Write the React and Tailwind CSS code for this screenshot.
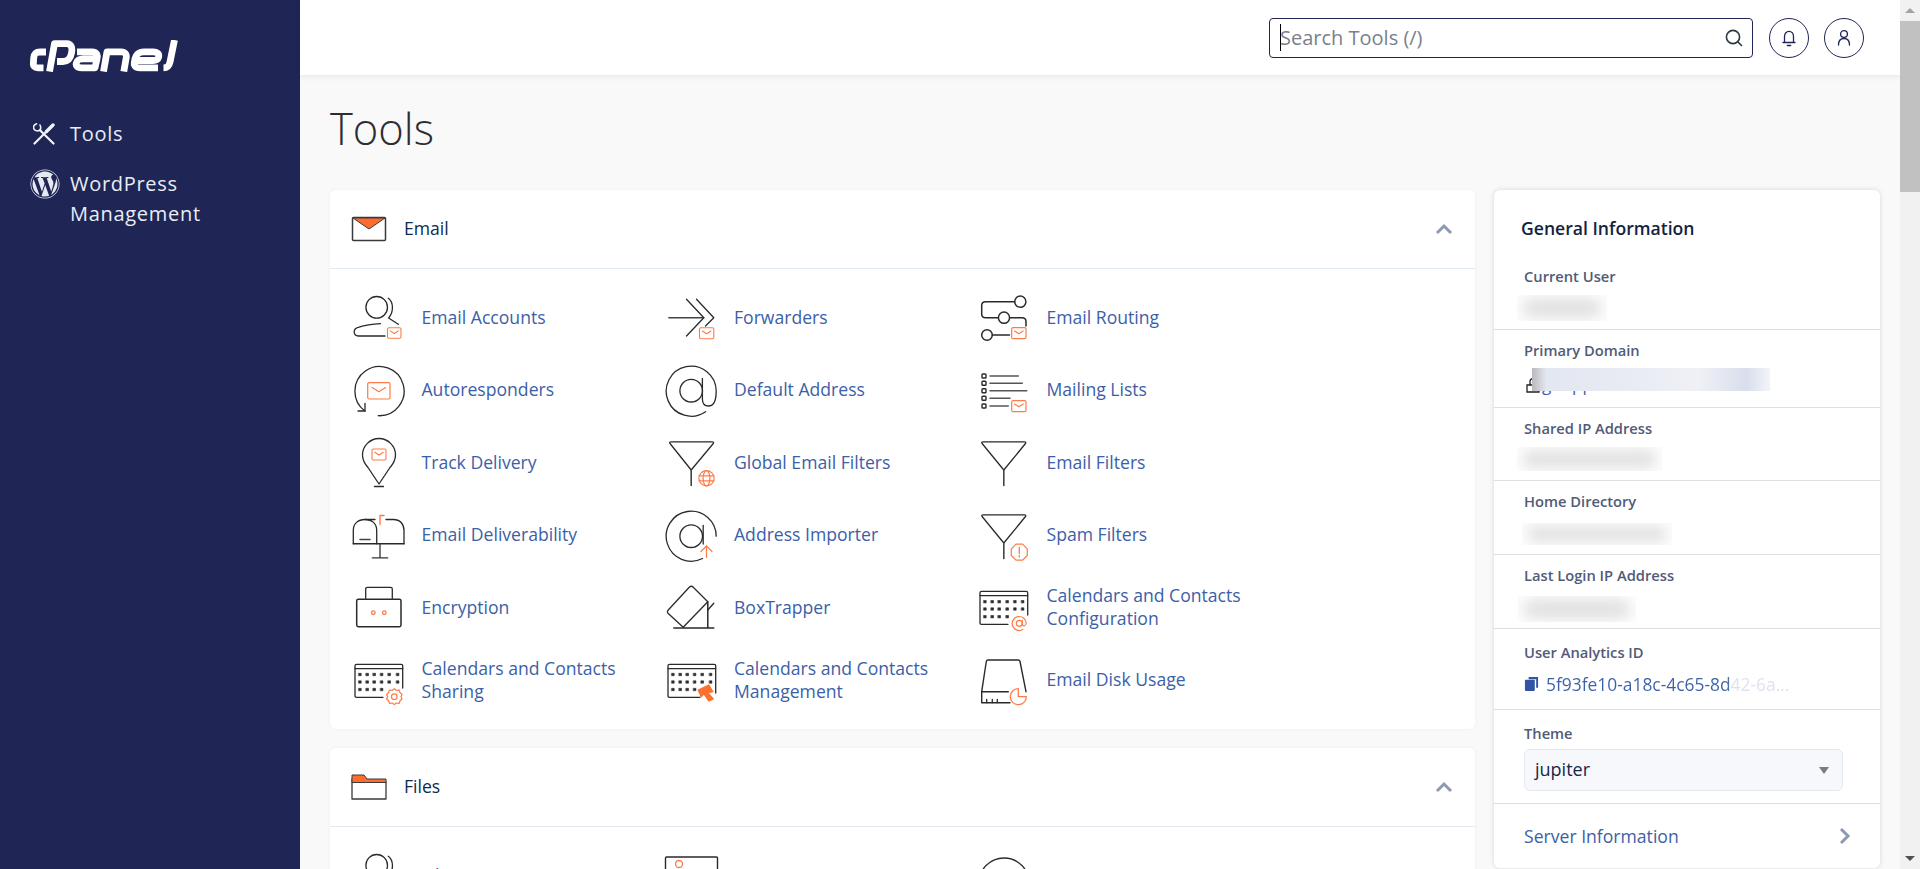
import React from "react";
import { FaWordpress } from "react-icons/fa";

const DARK = "#2a2a2a";
const OR = "#ff7a45";

function Mail({ x, y, w, h, sw = 1.1 }) {
  return (
    <g stroke={OR} strokeWidth={sw} fill="none">
      <rect x={x} y={y} width={w} height={h} rx="1.5" />
      <path d={`M${x + w * 0.2} ${y + h * 0.3} L${x + w / 2} ${y + h * 0.55} L${x + w * 0.8} ${y + h * 0.3}`} />
    </g>
  );
}

function Funnel({ x1 = 5.6, x2 = 50, ax = 27.8 }) {
  return (
    <g>
      <path d={`M${x1 + 1.5} 7.8 H${x2 - 1.5} Q${x2 + 0.5} 7.8 ${x2 - 0.5} 9.5 L${ax} 36 L${x1 + 0.5} 9.5 Q${x1 - 0.5} 7.8 ${x1 + 1.5} 7.8 Z`} />
      <path d={`M${ax} 36 V51.5`} strokeWidth="1.6" stroke="#444" />
    </g>
  );
}

function Calendar({ children, thirdCols = 4, notch = "M32 45.3 H5.5 Q4 45.3 4 44 V13.8 Q4 12.3 5.5 12.3 H50.2 Q51.7 12.3 51.7 13.8 V36", xs = [9, 16.3, 23.3, 30.7, 38.3, 46.7], ys = [22.5, 30, 37.5] }) {
  return (
    <g>
      <path d={notch} />
      <path d={`M4 16.6 H51.7`} />
      {ys.map((yy, ri) =>
        xs.slice(0, ri === 2 ? thirdCols : xs.length).map((xx) => (
          <rect key={`${xx}-${yy}`} x={xx - 1.2} y={yy - 1.2} width="2.4" height="2.4" fill={DARK} stroke={DARK} strokeWidth="0.6" />
        ))
      )}
      {children}
    </g>
  );
}

const icons = {
  accounts: (
    <g>
      <circle cx="25.7" cy="18.3" r="10.8" />
      <path d="M37.3 9.3 C42.5 13 43 23 37.6 29 L47.3 35.3" />
      <path d="M34 47 H7.3 C1.8 47 1.8 39.5 7.3 38.3 C13 36.5 22 35 29.5 34.6" />
      <Mail x={36.5} y={38.7} w={13.5} h={10.6} />
    </g>
  ),
  auto: (
    <g>
      <path d="M27.3 53.7 A24.6 24.6 0 1 0 14 49" />
      <path d="M14 41.3 V49 H7" />
      <Mail x={16.7} y={20.7} w={22.3} h={16.3} sw={1.2} />
    </g>
  ),
  track: (
    <g>
      <path d="M28 50 L17 33.5 C13 29 11.5 25 11.5 21 C11.5 12 19 4.5 28 4.5 C37 4.5 44.5 12 44.5 21 C44.5 25 43 29 39 33.5 Z" />
      <path d="M23.5 52.5 H32.5" />
      <Mail x={21} y={15} w={14} h={11} sw={1.1} />
    </g>
  ),
  deliver: (
    <g>
      <path d="M2.3 36.8 V23.5 C2.3 16.5 7 12.5 14 12.5 C21 12.5 25.7 16.5 25.7 23.5 V36.8" />
      <path d="M14 12.5 H24" />
      <path d="M35 12.5 H42.3 C49 12.5 53 17 53 23.5 V36.8" />
      <path d="M2.3 36.8 H53" strokeWidth="1.5" />
      <path d="M9 32.5 H19" stroke="#444" strokeWidth="1.5" />
      <path d="M29 36.8 V50.8 M21.3 50.8 H36.7" stroke="#333" />
      <path d="M29 17.5 V8.5 H33" stroke={OR} strokeWidth="1.4" />
    </g>
  ),
  encrypt: (
    <g>
      <rect x="5.7" y="20.3" width="44.3" height="27.4" rx="1.6" strokeWidth="1.5" />
      <path d="M14.7 19.3 V10 Q14.7 8.3 16.4 8.3 H39.6 Q41.3 8.3 41.3 10 V19.3" />
      <circle cx="22.3" cy="33.7" r="1.8" stroke={OR} />
      <circle cx="33.3" cy="33.7" r="1.8" stroke={OR} />
    </g>
  ),
  calShare: (
    <Calendar>
      <g stroke={OR} strokeWidth="1.2">
        <path d="M43.3 36.8 L45.3 38.3 L48.2 38 L49 40.6 L51 42.5 L50 44.8 L51 47 L49 48.8 L48.2 51.4 L45.3 51 L43.3 52.6 L41.3 51 L38.4 51.4 L37.6 48.8 L35.6 47 L36.6 44.8 L35.6 42.5 L37.6 40.6 L38.4 38 L41.3 38.3 Z" />
        <circle cx="43.3" cy="44.7" r="2.8" />
      </g>
    </Calendar>
  ),
  forward: (
    <g>
      <path d="M4.8 28.7 H39.8" strokeWidth="1.5" stroke="#444" />
      <path d="M22.5 10.3 L39.8 28.7 L22.5 47" />
      <path d="M32.5 10.3 L49.8 28.7 L41.5 37" />
      <Mail x={35.5} y={38.7} w={14.3} h={11} />
    </g>
  ),
  defaultAddr: (
    <g>
      <circle cx="27.2" cy="28.7" r="11.3" />
      <path d="M38.4 16.5 V37 C38.4 42 41 44 44.5 44 C49.5 44 52.2 38 52.2 29 A25 25 0 1 0 41.5 49.7" />
    </g>
  ),
  global: (
    <g>
      <Funnel x1={5.5} x2={49.8} ax={27.2} />
      <g stroke={OR} strokeWidth="1.2">
        <circle cx="42.5" cy="44.3" r="7.6" />
        <ellipse cx="42.5" cy="44.3" rx="3.4" ry="7.6" />
        <path d="M35 41.8 H50 M35 46.8 H50" />
      </g>
    </g>
  ),
  importer: (
    <g>
      <circle cx="27.2" cy="29.2" r="11.3" />
      <path d="M39.2 18.5 V37" />
      <path d="M52.2 29.2 A25 25 0 1 0 38.5 51.5" />
      <path d="M42.5 50.5 V39.5 M37 44.5 L42.5 38.8 L48 44.5" stroke={OR} strokeWidth="1.2" />
    </g>
  ),
  boxtrapper: (
    <g>
      <path d="M25.5 8 Q27.2 6.5 29 8 L43.8 22.7 L19.2 48.3 L4 34.2 Q2.6 32.7 4 31.2 Z" />
      <path d="M43.8 22.7 V48.7 M9.8 49 H49.8" strokeWidth="1.5" />
      <path d="M43.8 31 L49.8 24.3" />
    </g>
  ),
  calManage: (
    <Calendar notch="M36 45.3 H5.5 Q4 45.3 4 44 V13.8 Q4 12.3 5.5 12.3 H50.2 Q51.7 12.3 51.7 13.8 V41">
      <path d="M34.2 38 L44.8 33 L48.8 39.7 L43.8 40.7 L49.2 47 L44.8 49 L39.8 41.7 L37.2 44.7 Z" fill="#ff6f2e" stroke="#ff6f2e" />
    </Calendar>
  ),
  routing: (
    <g>
      <circle cx="44.3" cy="12.7" r="5.6" strokeWidth="1.5" />
      <path d="M38.7 12.7 H9.5 Q5.7 12.7 5.7 16.5 V25 Q5.7 28.7 9.5 28.7 H22.3" strokeWidth="1.5" />
      <circle cx="28" cy="28.7" r="5.6" strokeWidth="1.5" />
      <path d="M33.6 28.7 H46 Q50 28.7 50 32.5 V37" strokeWidth="1.5" />
      <circle cx="11" cy="46" r="5.3" strokeWidth="1.5" />
      <path d="M16.3 46 H33.5" strokeWidth="1.5" />
      <Mail x={35.7} y={38.7} w={14.3} h={11} sw={1.2} />
    </g>
  ),
  lists: (
    <g>
      {[14, 21.3, 28.7, 36.3, 44].map((y) => (
        <rect key={y} x="6" y={y - 2} width="4" height="4" rx="0.8" strokeWidth="1.4" />
      ))}
      <path d="M14 14 H42.3 M14 21.3 H46.3 M14 28.7 H50.7 M14 36.3 H34 M14 44 H32.3" stroke="#555" strokeWidth="1.5" />
      <Mail x={35.7} y={38.7} w={14.3} h={11} sw={1.2} />
    </g>
  ),
  filters: <Funnel />,
  spam: (
    <g>
      <Funnel />
      <path d="M40 37.2 H46.6 L51.3 41.9 V48.5 L46.6 53.2 H40 L35.3 48.5 V41.9 Z" stroke={OR} strokeWidth="1.2" />
      <path d="M43.3 40.5 V46.5 M43.3 48.5 V50" stroke={OR} strokeWidth="1.3" />
    </g>
  ),
  calConfig: (
    <Calendar xs={[9, 16.3, 23.3, 31.3, 39, 46.7]} ys={[22.7, 30, 37.7]}>
      <g stroke={OR} strokeWidth="1.2">
        <circle cx="43.3" cy="44.3" r="3" />
        <path d="M46.3 41 V45.5 C46.3 47.5 49.8 47.5 50.2 44.3 A7 7 0 1 0 46.8 50.5" />
      </g>
    </Calendar>
  ),
  disk: (
    <g>
      <path d="M5.7 39.7 L10.3 9.5 Q10.5 8 12.3 8 H42 Q43.8 8 44 9.5 L50 39.7" strokeWidth="1.4" />
      <path d="M32.3 39.7 H5.7 V50.7 H34" strokeWidth="1.4" />
      <path d="M10.7 47.3 V50.7 M16.3 47.3 V50.7 M21.3 47.3 V50.7" />
      <path d="M42.3 36.7 A8 8 0 1 0 50.3 44.7 H42.3 Z" stroke={OR} strokeWidth="1.3" />
    </g>
  ),
  fileMgr: (
    <g>
      <circle cx="25.7" cy="18.3" r="10.8" />
      <path d="M37.3 9.3 C42.5 13 43 23 37.6 29" />
    </g>
  ),
  images: (
    <g>
      <rect x="1.5" y="10" width="52" height="44" rx="1" strokeWidth="1.4" />
      <circle cx="15" cy="17" r="3.5" stroke={OR} />
    </g>
  ),
  dirPriv: <circle cx="28" cy="36" r="25" />,
};

function Icon({ name }) {
  return (
    <svg viewBox="0 0 56 56" className="w-14 h-14 shrink-0" fill="none" stroke={DARK} strokeWidth="1.3" strokeLinecap="round" strokeLinejoin="round">
      {icons[name]}
    </svg>
  );
}

function Tool({ name, label }) {
  return (
    <div className="flex items-center gap-[14.5px] h-[72.5px]">
      <Icon name={name} />
      <span className="text-[17.6px] leading-[23px] text-[#3b60a8] w-[220px]">{label}</span>
    </div>
  );
}

const emailTools = [
  ["accounts", "Email Accounts"], ["forward", "Forwarders"], ["routing", "Email Routing"],
  ["auto", "Autoresponders"], ["defaultAddr", "Default Address"], ["lists", "Mailing Lists"],
  ["track", "Track Delivery"], ["global", "Global Email Filters"], ["filters", "Email Filters"],
  ["deliver", "Email Deliverability"], ["importer", "Address Importer"], ["spam", "Spam Filters"],
  ["encrypt", "Encryption"], ["boxtrapper", "BoxTrapper"], ["calConfig", "Calendars and Contacts Configuration"],
  ["calShare", "Calendars and Contacts Sharing"], ["calManage", "Calendars and Contacts Management"], ["disk", "Email Disk Usage"],
];
const fileTools = [["fileMgr", "File Manager"], ["images", "Images"], ["dirPriv", "Directory Privacy"]];

function Chevron() {
  return (
    <svg viewBox="0 0 18 12" className="w-[18px] h-3" fill="none" stroke="#8e9ab3" strokeWidth="3" strokeLinejoin="miter">
      <path d="M2 10 L9 3 L16 10" />
    </svg>
  );
}

function CardHead({ icon, title }) {
  return (
    <div className="flex items-center h-[79px] border-b border-[#e3e9f0] pl-[21px] pr-[22px]">
      <div className="w-[53px]">{icon}</div>
      <span className="text-[17.6px] text-[#0d2b4e] pb-[2px]">{title}</span>
      <div className="ml-auto"><Chevron /></div>
    </div>
  );
}

function Blur({ w, h, ml = 0 }) {
  return (
    <div className="bg-[#fcfcfc] overflow-hidden flex items-center justify-center" style={{ width: w, height: h, marginLeft: ml }}>
      <div className="rounded-[10px] blur-[6px] bg-[#e3e3e3]" style={{ width: w - 12, height: h - 6 }} />
    </div>
  );
}

function InfoRow({ label, h, children }) {
  return (
    <div className={`${h} border-b border-[#dfdfe3] px-[30px]`}>
      <div className="text-[14.7px] font-semibold text-[#515b78] leading-5 -mt-px mb-px">{label}</div>
      {children}
    </div>
  );
}

function CPanelLogo() {
  return (
    <svg viewBox="0 0 150 32" className="w-[150px] h-8" fill="none" stroke="#fff" strokeWidth="6.8" strokeLinejoin="round" strokeLinecap="butt" role="img" aria-label="cPanel">
      <path d="M16 12 H10 C5.5 12 4.2 14 3.7 18 L3.4 23 C3 26 4.5 27.8 8 27.8 H13.5" />
      <path d="M19.5 31.5 L24.5 3.7 H36.5 C41.5 3.7 42.5 8 41.5 13 C40.5 19 37.5 21.5 33 21.5 H27" />
      <path d="M47 11.8 H62 C67 11.8 68 15 67 19 L65 27.8 H51.5 C47 27.8 45.5 25.5 46.5 22.5 C47.5 19.5 49.5 18.8 53.5 18.8 H66" />
      <path d="M73.5 31.5 L77 11.8 H91 C96 11.8 97 15 96 19 L93.8 31.5" />
      <path d="M128 27.8 H110 C105 27.8 103.5 25 104.5 21 C105.5 15 108 11.8 114 11.8 H123 C128 11.8 129.5 14.5 128.5 17.5 C127.8 19.8 126 20.5 123 20.5 H106" />
      <path d="M144.5 0 L140 22 C139 26.5 137.5 27.8 133.5 27.8" />
    </svg>
  );
}

function ToolsGlyph() {
  return (
    <svg viewBox="0 0 22 22" className="w-[22px] h-[22px]" fill="none" stroke="#f2f4f8" strokeLinecap="round" strokeLinejoin="round">
      <path d="M7 7.2 L20.5 20.5" strokeWidth="2.2" />
      <path d="M3.5 0.8 C1.2 1.6 0 3.6 0.8 5.6 C1.6 7.4 4 8.4 6.2 7.6 C7.8 6.6 8 4.2 7 2" strokeWidth="1.6" />
      <path d="M1.5 20.5 L13 9" strokeWidth="2.2" />
      <path d="M13.5 8.5 L20 2" strokeWidth="3.4" />
    </svg>
  );
}

export default function App() {
  return (
    <div className="flex h-[869px] w-full overflow-hidden bg-[#f9f9f9] font-['Open_Sans',sans-serif]">
      <aside className="w-[300px] shrink-0 bg-[#1f2555] flex flex-col pl-[30px] pt-10 text-[#e9edf5]">
        <CPanelLogo />
        <nav className="mt-[47px] flex flex-col text-[20px] tracking-[0.7px] leading-[30px]">
          <div className="flex items-center">
            <div className="w-[40px] pl-[3px]"><ToolsGlyph /></div>
            <span>Tools</span>
          </div>
          <div className="flex mt-[20px]">
            <div className="w-[40px]"><FaWordpress className="w-[30px] h-[30px] text-[#e6e9f2]" /></div>
            <span className="w-[200px]">WordPress<br />Management</span>
          </div>
        </nav>
      </aside>

      <main className="flex-1 min-w-0 flex flex-col">
        <header className="h-[75px] shrink-0 bg-white shadow-[0_2px_6px_rgba(0,0,0,0.07)] flex items-center justify-end gap-4 pr-9">
          <div className="w-[484px] h-10 border border-[#1f2555] rounded-[4px] flex items-center pl-[10px] pr-[8px]">
            <span className="w-px h-[27px] bg-black" />
            <span className="text-[20px] text-[#7a7f8c] ml-[-1px]">Search Tools (/)</span>
            <svg viewBox="0 0 20 20" className="ml-auto w-[20px] h-[20px]" fill="none" stroke="#2a3a45" strokeWidth="1.6" strokeLinecap="round">
              <circle cx="9" cy="9" r="6.6" /><path d="M14 14 L17.5 17.5" />
            </svg>
          </div>
          <div className="w-10 h-10 rounded-full border border-[#1f2555] flex items-center justify-center">
            <svg viewBox="0 0 20 20" className="w-5 h-5" fill="none" stroke="#1f2555" strokeWidth="1.3" strokeLinecap="round">
              <path d="M4 14.5 H16 M5.5 14.5 V8.5 C5.5 5.5 7.5 3.3 10 3.3 C12.5 3.3 14.5 5.5 14.5 8.5 V14.5" />
              <path d="M8.3 17.5 H11.7" />
            </svg>
          </div>
          <div className="w-10 h-10 -ml-px rounded-full border border-[#1f2555] flex items-center justify-center">
            <svg viewBox="0 0 20 20" className="w-5 h-5" fill="none" stroke="#1f2555" strokeWidth="1.3" strokeLinecap="round">
              <circle cx="10" cy="6" r="3.4" />
              <path d="M4.5 17 C4.5 12.5 6.5 10.5 10 10.5 C13.5 10.5 15.5 12.5 15.5 17" />
            </svg>
          </div>
        </header>

        <div className="flex-1 min-h-0 overflow-hidden pl-[30px]">
          <h1 className="h-[115px] pt-[24px] text-[43.5px] leading-[60px] font-light text-[#2d2d33]">Tools</h1>
          <div className="flex gap-[19px] items-start">
            <div className="w-[1145px] flex flex-col gap-[19px]">
              <section className="bg-white rounded-[6px] shadow-[0_0_4px_rgba(0,0,0,0.04)] h-[539px]">
                <CardHead
                  title="Email"
                  icon={
                    <svg viewBox="0 0 36 26" className="w-9 h-[26px]" strokeLinejoin="round">
                      <rect x="1.5" y="1.5" width="33" height="23" rx="1" fill="#fff" stroke="#3a3a3a" strokeWidth="1.5" />
                      <path d="M2 2 H34 L18 13 Z" fill="#ff6c2c" stroke="#3a3a3a" strokeWidth="1" />
                    </svg>
                  }
                />
                <div className="grid grid-cols-[repeat(3,312.5px)] pl-[21px] pt-3">
                  {emailTools.map(([n, l]) => <Tool key={n} name={n} label={l} />)}
                </div>
              </section>
              <section className="bg-white rounded-[6px] shadow-[0_0_4px_rgba(0,0,0,0.04)]">
                <CardHead
                  title="Files"
                  icon={
                    <svg viewBox="0 0 36 26" className="w-9 h-[26px]" strokeLinejoin="round">
                      <path d="M1 5 V25 H35 V8 Z" fill="#fff" stroke="#3a3a3a" strokeWidth="1.3" />
                      <path d="M1 1 H13 L16 5 H35 V8.5 H1 Z" fill="#ff6c2c" stroke="#3a3a3a" strokeWidth="1" />
                    </svg>
                  }
                />
                <div className="grid grid-cols-[repeat(3,312.5px)] pl-[21px] pt-3">
                  {fileTools.map(([n, l]) => <Tool key={n} name={n} label={l} />)}
                </div>
              </section>
            </div>

            <aside className="w-[386px] bg-white rounded-[6px] shadow-[0_0_5px_rgba(0,0,0,0.14)] h-[678px] flex flex-col">
              <div className="px-[27px] pt-[26px] h-[76px] text-[17.6px] font-semibold text-[#12233f] leading-6">General Information</div>
              <InfoRow label="Current User" h="h-[64px] pt-px">
                <div className="pt-[8px]"><Blur w={90} h={26} ml={-7} /></div>
              </InfoRow>
              <InfoRow label="Primary Domain" h="h-[78px] pt-[11px]">
                <div className="relative mt-[8px] h-[26px]">
                  <svg viewBox="0 0 14 16" className="absolute left-[2px] top-[9px] w-[14px] h-[16px]" fill="none" stroke="#222" strokeWidth="1.3">
                    <path d="M1 15 H13 V8 H1 Z M4 8 V4 C4 1 10 1 10 4" />
                  </svg>
                  <span className="absolute left-[18px] top-[5px] text-[17px] text-[#3b60a8] leading-[24px]">gr app</span>
                  <div className="absolute left-[8px] top-0 w-[238px] h-[23px] bg-[linear-gradient(90deg,#b9b9bd_0%,#e3e7f1_6%,#e8ebf3_40%,#eff1f6_70%,#d8deed_90%,#f2f4f8_100%)]" />
                </div>
              </InfoRow>
              <InfoRow label="Shared IP Address" h="h-[73px] pt-[11px]">
                <div className="pt-[8px]"><Blur w={145} h={24} ml={-7} /></div>
              </InfoRow>
              <InfoRow label="Home Directory" h="h-[74px] pt-[11px]">
                <div className="pt-[11px]"><Blur w={150} h={22} ml={-2} /></div>
              </InfoRow>
              <InfoRow label="Last Login IP Address" h="h-[74px] pt-[11px]">
                <div className="pt-[10px]"><Blur w={118} h={26} ml={-6} /></div>
              </InfoRow>
              <InfoRow label="User Analytics ID" h="h-[81px] pt-[14px]">
                <div className="flex items-center mt-[10px] h-[24px] w-[270px] overflow-hidden">
                  <svg viewBox="0 0 16 16" className="w-[15px] h-[16px] shrink-0 mr-[7px]">
                    <path d="M5 0.5 H15 V12 H13 V3 H5 Z" fill="#2f55a4" />
                    <rect x="1" y="3.5" width="10.5" height="12" rx="1" fill="#2f55a4" />
                  </svg>
                  <span className="text-[17.4px] whitespace-nowrap bg-[linear-gradient(90deg,#3b60a8_0%,#3b60a8_75%,#dbe1ee_76%,#dbe1ee_100%)] bg-clip-text text-transparent">5f93fe10-a18c-4c65-8d42-6a...</span>
                </div>
              </InfoRow>
              <InfoRow label="Theme" h="h-[94px] pt-[14px]">
                <div className="mt-[6px] w-[319px] h-[42px] rounded-[6px] border border-[#e4e8f2] bg-[#f7f8fc] flex items-center pl-[10px] pr-[13px]">
                  <span className="text-[18px] text-[#16264a] pb-[2px]">jupiter</span>
                  <span className="ml-auto w-0 h-0 border-x-[5px] border-x-transparent border-t-[7px] border-t-[#7b7b80]" />
                </div>
              </InfoRow>
              <div className="flex items-center flex-1 px-[30px] text-[17.6px] text-[#3b60a8]">
                <span>Server Information</span>
                <svg viewBox="0 0 12 18" className="ml-auto mr-[-1px] w-3 h-[18px]" fill="none" stroke="#8e9ab3" strokeWidth="3">
                  <path d="M2 2 L9 9 L2 16" />
                </svg>
              </div>
            </aside>
          </div>
        </div>
      </main>

      <div className="w-5 shrink-0 bg-[#f1f1f1] flex flex-col items-center">
        <div className="h-[21px] flex items-center justify-center">
          <span className="w-0 h-0 border-x-[5px] border-x-transparent border-b-[5px] border-b-[#a3a3a3]" />
        </div>
        <div className="w-full h-[171px] bg-[#c1c1c1]" />
        <div className="mt-auto h-[21px] flex items-center justify-center">
          <span className="w-0 h-0 border-x-[5px] border-x-transparent border-t-[5px] border-t-[#505050]" />
        </div>
      </div>
    </div>
  );
}
